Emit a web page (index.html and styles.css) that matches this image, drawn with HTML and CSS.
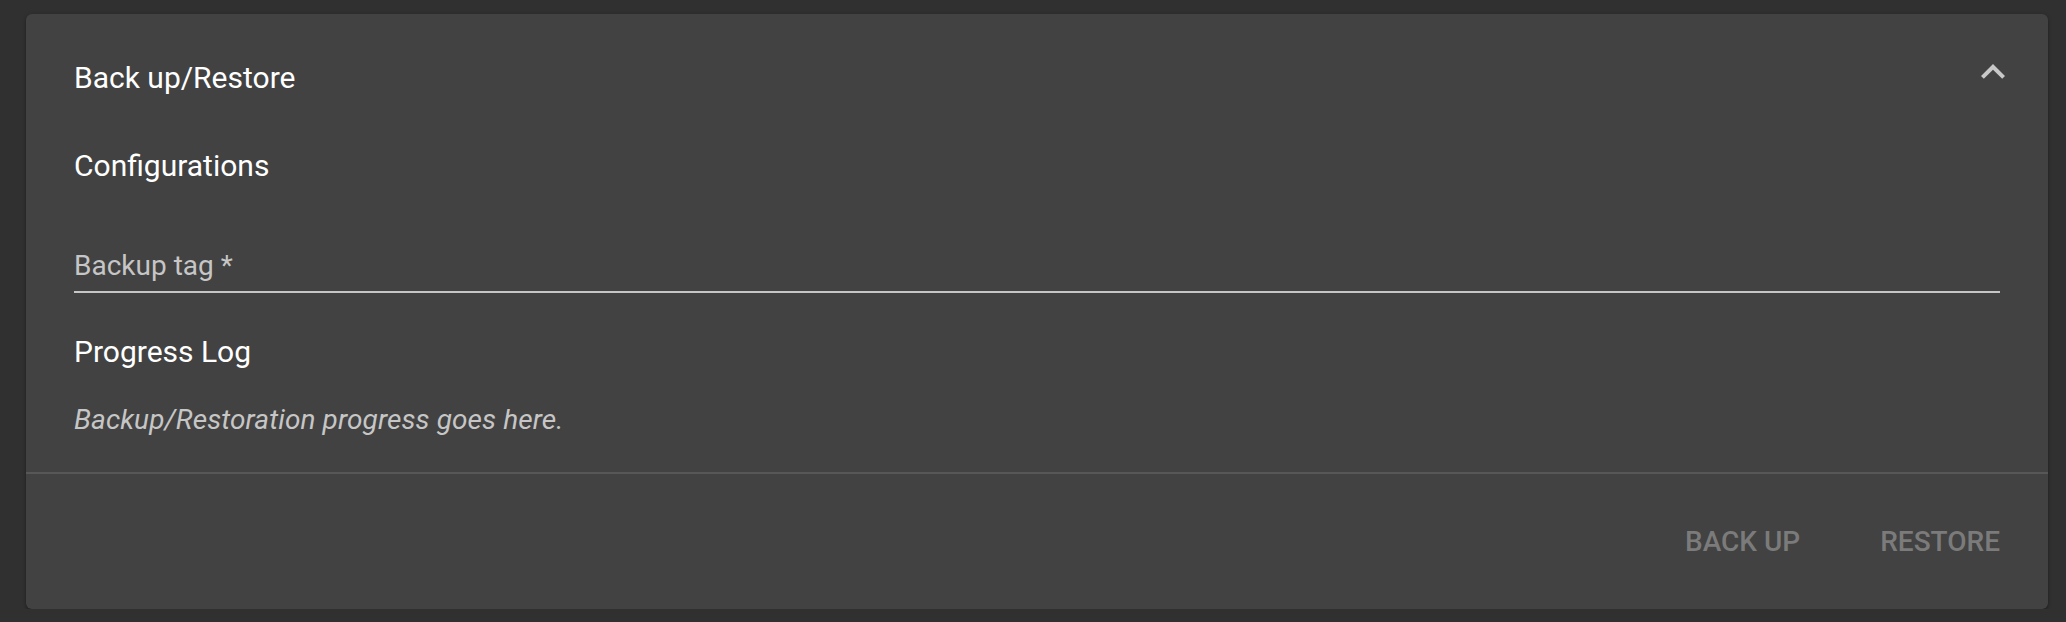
FILE: index.html
```
<!DOCTYPE html>
<html lang="en">
<head>
<meta charset="utf-8">
<title>Back up/Restore</title>
<link rel="stylesheet" href="styles.css">
</head>
<body>
<div class="page">
  <section class="panel">
    <div class="summary">
      <div class="title">Back up/Restore</div>
      <svg class="expand" viewBox="0 0 24 24" aria-hidden="true"><path d="M12 8l-6 6 1.41 1.41L12 10.83l4.59 4.58L18 14z"/></svg>
    </div>
    <div class="details">
      <div class="section-title">Configurations</div>
      <div class="field">
        <label class="field-label">Backup tag *</label>
      </div>
      <div class="section-title log-title">Progress Log</div>
      <div class="log-text">Backup/Restoration progress goes here.</div>
    </div>
    <div class="divider"></div>
    <div class="actions">
      <button class="btn" disabled>Back up</button>
      <button class="btn" disabled>Restore</button>
    </div>
  </section>
</div>
</body>
</html>
```
FILE: styles.css
```
html, body {
  margin: 0;
  padding: 0;
  background: #303030;
  font-family: Roboto, "Liberation Sans", sans-serif;
}
.page {
  padding: 14px 18px 0 26px;
}
.panel {
  background: #424242;
  border-radius: 6px;
  box-shadow: 0 2px 2px rgba(0,0,0,0.18), 0 1px 4px rgba(0,0,0,0.22);
  display: flex;
  flex-direction: column;
}
.summary {
  height: 128px;
  box-sizing: border-box;
  display: flex;
  align-items: center;
  padding: 0 48px 2px;
}
.title {
  flex: 1;
  color: #ffffff;
  font-size: 30px;
  line-height: 45px;
}
.expand {
  width: 48px;
  height: 48px;
  fill: #c8c8c8;
  align-self: flex-start;
  margin-top: 34px;
  margin-right: -17px;
}
.details {
  padding: 1px 48px 31px;
  display: flex;
  flex-direction: column;
}
.section-title {
  color: #ffffff;
  font-size: 30px;
  line-height: 45px;
}
.field {
  margin-top: 62px;
  padding-bottom: 9px;
  border-bottom: 2px solid #c6c6c6;
}
.field-label {
  display: block;
  color: #c6c6c6;
  font-size: 28px;
  line-height: 32px;
}
.log-title {
  margin-top: 36px;
}
.log-text {
  margin-top: 25px;
  color: #c6c6c6;
  font-size: 28px;
  line-height: 42px;
  font-style: italic;
  letter-spacing: 0.1px;
}
.divider {
  height: 2px;
  background: #575757;
}
.actions {
  height: 135px;
  display: flex;
  align-items: center;
  justify-content: flex-end;
  gap: 80px;
  padding: 0 48px;
}
.btn {
  background: none;
  border: 0;
  padding: 0;
  font-family: Roboto, "Liberation Sans", sans-serif;
  font-size: 28px;
  font-weight: 500;
  line-height: 49px;
  text-transform: uppercase;
  color: #7b7b7b;
}
```
